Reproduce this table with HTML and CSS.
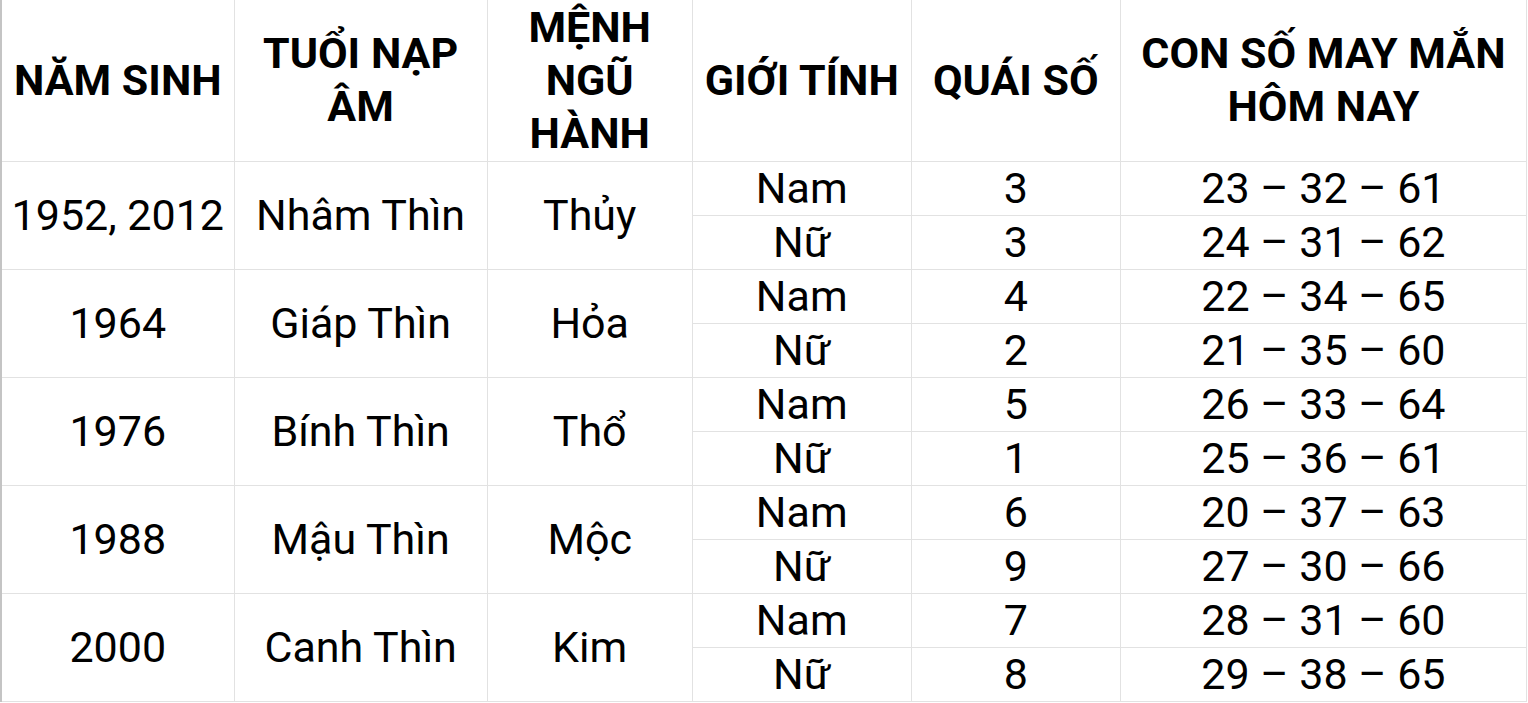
FILE: index.html
```html
<!DOCTYPE html>
<html lang="vi">
<head>
<meta charset="utf-8">
<title>Con số may mắn</title>
<link rel="stylesheet" href="styles.css">
</head>
<body>
<table class="sheet">
  <colgroup>
    <col class="c1"><col class="c2"><col class="c3"><col class="c4"><col class="c5"><col class="c6">
  </colgroup>
  <thead>
    <tr class="head">
      <th>NĂM SINH</th>
      <th>TUỔI NẠP<br>ÂM</th>
      <th>MỆNH<br>NGŨ<br>HÀNH</th>
      <th>GIỚI TÍNH</th>
      <th>QUÁI SỐ</th>
      <th>CON SỐ MAY MẮN<br>HÔM NAY</th>
    </tr>
  </thead>
  <tbody>
    <tr><td rowspan="2">1952, 2012</td><td rowspan="2">Nhâm Thìn</td><td rowspan="2">Thủy</td><td>Nam</td><td>3</td><td>23 – 32 – 61</td></tr>
    <tr><td>Nữ</td><td>3</td><td>24 – 31 – 62</td></tr>
    <tr><td rowspan="2">1964</td><td rowspan="2">Giáp Thìn</td><td rowspan="2">Hỏa</td><td>Nam</td><td>4</td><td>22 – 34 – 65</td></tr>
    <tr><td>Nữ</td><td>2</td><td>21 – 35 – 60</td></tr>
    <tr><td rowspan="2">1976</td><td rowspan="2">Bính Thìn</td><td rowspan="2">Thổ</td><td>Nam</td><td>5</td><td>26 – 33 – 64</td></tr>
    <tr><td>Nữ</td><td>1</td><td>25 – 36 – 61</td></tr>
    <tr><td rowspan="2">1988</td><td rowspan="2">Mậu Thìn</td><td rowspan="2">Mộc</td><td>Nam</td><td>6</td><td>20 – 37 – 63</td></tr>
    <tr><td>Nữ</td><td>9</td><td>27 – 30 – 66</td></tr>
    <tr><td rowspan="2">2000</td><td rowspan="2">Canh Thìn</td><td rowspan="2">Kim</td><td>Nam</td><td>7</td><td>28 – 31 – 60</td></tr>
    <tr><td>Nữ</td><td>8</td><td>29 – 38 – 65</td></tr>
  </tbody>
</table>
</body>
</html>
```

FILE: styles.css
```css
html, body {
  margin: 0;
  padding: 0;
  background: #ffffff;
}

body {
  font-family: Roboto, "Liberation Sans", sans-serif;
  color: #000000;
  overflow: hidden;
}

.sheet {
  border-collapse: collapse;
  table-layout: fixed;
  width: 1527px;
  border-left: 2px solid #c4c4c4;
}

.c1 { width: 233px; }
.c2 { width: 253px; }
.c3 { width: 205px; }
.c4 { width: 219px; }
.c5 { width: 209px; }
.c6 { width: 406px; }

.sheet th,
.sheet td {
  border: 1px solid #e2e2e2;
  padding: 0;
  text-align: center;
  vertical-align: middle;
  white-space: nowrap;
}

.sheet thead th {
  border-top: none;
}

.head {
  height: 161px;
}

.head th {
  font-weight: 700;
  font-size: 43px;
  line-height: 53px;
}

.sheet tbody tr {
  height: 54px;
}

.sheet td {
  font-size: 43px;
  line-height: 48px;
  font-weight: 400;
}
```
